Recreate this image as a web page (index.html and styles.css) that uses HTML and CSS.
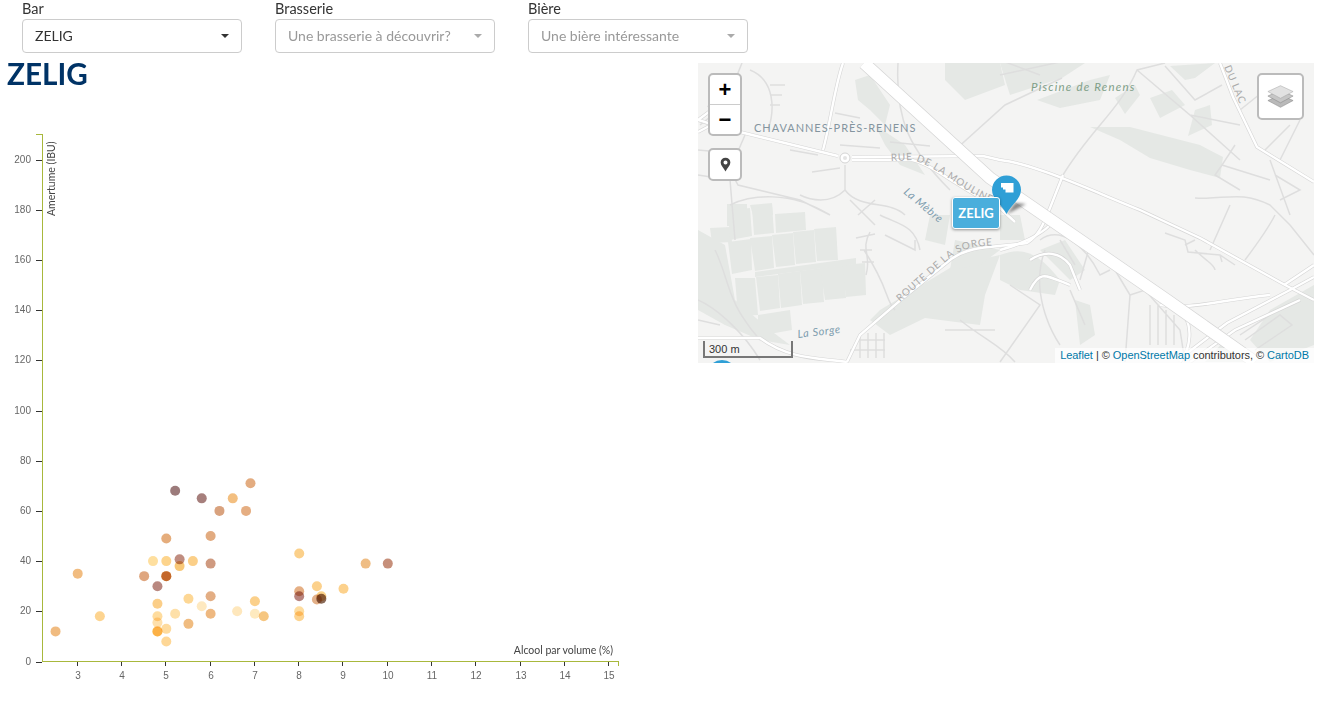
FILE: index.html
```html
<!DOCTYPE html>
<html lang="fr">
<head>
  <meta charset="UTF-8">
  <title>ZELIG</title>
  <link rel="stylesheet" href="styles.css">
</head>
<body>
  <div class="filters">
    <div class="filter">
      <label>Bar</label>
      <div class="select"><span class="value">ZELIG</span><span class="arrow"></span></div>
    </div>
    <div class="filter">
      <label>Brasserie</label>
      <div class="select empty"><span class="value">Une brasserie à découvrir?</span><span class="arrow"></span></div>
    </div>
    <div class="filter">
      <label>Bière</label>
      <div class="select empty"><span class="value">Une bière intéressante</span><span class="arrow"></span></div>
    </div>
  </div>

  <div class="main">
    <div class="left">
      <h1>ZELIG</h1>
      <svg id="chart" class="chart" viewBox="0 125 640 565"></svg>
    </div>

    <div class="map">
      <svg class="tiles" viewBox="698 63 616 300">
        <defs>
          <g id="streets">
            <path d="M698 150 L720 152 M698 175 L730 180 L735 240 M742 63 L725 105 L700 125 M750 70 C775 80 775 110 768 130 M770 85 H785 M770 95 H782 M770 105 H780"/>
            <path d="M745 135 L730 170 L738 185 L800 200 L830 215 C790 190 750 195 730 205"/>
            <path d="M845 165 V190 C860 210 890 200 905 215 M845 190 C830 205 810 200 800 195 M850 200 L875 225 M858 215 L875 200"/>
            <path d="M835 113 L860 118 M840 145 L880 148 M890 142 L930 146 M818 155 L790 150 M812 172 L840 168"/>
            <path d="M898 63 C895 120 910 150 950 190 M920 120 L955 150 L1005 105 L1062 78 M1000 75 L1060 62"/>
            <path d="M866 275 C872 255 860 250 870 232 M864 250 C890 290 885 300 895 310 M856 238 L875 234 M860 250 H872 M862 262 H874"/>
            <path d="M880 215 C900 225 915 225 920 250 M885 235 L915 250 L915 240"/>
            <path d="M1063 175 C1090 130 1120 110 1137 70 L1165 63 M1137 70 L1190 115 L1240 125 M1165 66 L1195 100 L1222 85 M1190 115 L1240 160 M1235 145 L1222 165 L1270 180 M1240 110 L1265 90"/>
            <path d="M1000 60 L1040 75 M1222 165 L1215 175 L1240 190 M1270 160 L1290 215 M1265 150 L1290 125 M1280 160 L1300 120 M1275 175 L1300 190 L1280 200"/>
            <path d="M1195 198 C1225 200 1240 190 1270 205 L1290 225 M1230 205 L1210 250 M1245 260 C1260 240 1270 225 1275 215 M1290 225 L1314 255 M1170 225 L1205 240"/>
            <path d="M1165 233 L1185 240 L1188 252 L1220 255 L1235 265 M1185 245 L1195 240 M1220 255 L1222 262 M1195 250 C1205 260 1215 265 1215 270"/>
            <path d="M1040 240 C1060 225 1085 245 1100 275 L1110 270 M1060 240 L1075 265 M1045 250 C1030 290 1050 330 1060 345 M1070 290 L1085 325 M1090 245 L1080 280"/>
            <path d="M1115 270 L1130 295 L1125 362 M1130 295 L1145 290 L1180 330 L1185 362 M1150 305 V345 M1158 305 V345 M1166 310 V345 M1174 315 V345"/>
            <path d="M860 333 V358 M868 333 V358 M876 333 V358 M884 333 V358 M850 350 H885 M860 340 H885"/>
            <path d="M1245 340 L1280 315 L1292 325 L1255 350 M1240 335 L1270 315"/>
            <path d="M698 300 C720 310 745 335 760 360 M715 250 C730 280 725 300 760 340 M698 320 L720 325"/>
            <path d="M960 320 C985 340 1000 345 1015 362 M1010 285 L1040 305 L1000 362 M945 330 H995"/>
          </g>
          <g id="links">
            <path d="M843 63 C835 85 830 125 823 150"/>
            <path d="M698 120 C715 125 730 130 740 132 L838 156"/>
            <path d="M698 120 L725 100 M708 105 L725 120 M698 132 L730 115"/>
            <path d="M852 157 L983 156 L1000 160 C1035 164 1090 190 1140 210 L1200 238 L1285 285 L1314 300"/>
            <path d="M852 160 L912 160 C935 165 960 190 1000 208 L1015 222"/>
            <path d="M847 362 L860 335 L903 298 L950 260 C970 245 990 248 1027 243 C1040 235 1045 220 1050 208 L1063 175"/>
            <path d="M1220 63 L1233 97 L1257 147 L1314 182"/>
            <path d="M1000 250 C1020 245 1040 235 1050 225 M1030 260 C1045 250 1060 252 1070 265 L1080 290 M1030 290 C1040 270 1045 275 1070 285"/>
            <path d="M1160 305 C1190 310 1220 300 1270 295 M1178 360 L1227 323 L1290 290 L1314 277 M1190 362 L1235 330 L1300 300 M1180 310 C1195 325 1190 350 1180 362"/>
            <path d="M698 338 H760 C790 360 820 358 847 362"/>
            <path d="M1284 285 L1314 265"/>
          </g>
        </defs>

        <rect class="land" x="698" y="63" width="616" height="300"/>

        <g class="green">
          <path d="M698 230 L725 245 L735 300 L770 330 L790 345 L760 340 L725 325 L698 310 Z"/>
          <path d="M855 80 L870 75 L890 105 L885 125 L870 110 L858 100 Z"/>
          <path d="M875 125 L905 145 L925 175 L900 165 L885 145 Z"/>
          <path d="M945 63 L1000 63 L1005 85 L965 100 L945 80 Z"/>
          <path d="M1000 63 L1085 63 L1062 78 L1010 95 Z"/>
          <path d="M1037 100 L1090 80 L1110 75 L1100 100 L1060 108 Z"/>
          <path d="M1115 98 L1135 85 L1140 95 L1125 114 Z"/>
          <path d="M1150 98 L1172 90 L1185 105 L1160 118 Z"/>
          <path d="M1195 110 L1210 105 L1212 125 L1188 136 Z"/>
          <path d="M1170 66 L1215 63 L1195 78 L1185 80 Z"/>
          <path d="M1090 127 L1130 127 L1200 145 L1223 157 L1220 178 L1190 170 L1150 158 L1120 140 Z"/>
          <path d="M880 310 L955 265 L1000 255 L985 295 L980 325 L925 318 L890 335 L870 320 Z"/>
          <path d="M955 240 L1000 250 L980 265 L950 270 Z"/>
          <path d="M930 215 L950 215 L945 245 L925 240 Z"/>
          <path d="M1000 255 C1025 245 1040 255 1060 280 L1055 295 L1020 290 L1000 280 Z"/>
          <path d="M1040 250 L1065 240 L1085 270 L1070 280 Z"/>
          <path d="M1075 300 L1090 305 L1095 335 L1080 345 Z"/>
          <path d="M1000 215 L1020 215 L1025 240 L1000 240 Z"/>
          <path d="M1205 362 L1225 340 L1250 362 Z"/>
          <path d="M1270 310 L1314 285 L1314 345 L1270 362 L1250 340 Z"/>
          <rect x="727" y="204" width="20" height="22"/>
          <path d="M750 205 L772 203 L773 215 L755 222 Z"/>
          <path d="M710 228 L730 227 L732 242 L712 243 Z"/>
          <path d="M728 210 L750 208 L752 236 L730 240 Z"/>
          <path d="M752 208 L772 205 L774 233 L754 235 Z"/>
          <path d="M775 214 L805 212 L806 230 L776 233 Z"/>
          <path d="M728 242 L751 239 L752 270 L732 274 Z"/>
          <path d="M750 238 L772 236 L774 268 L755 271 Z"/>
          <path d="M772 235 L793 233 L795 265 L776 267 Z"/>
          <path d="M793 232 L814 230 L816 262 L796 264 Z"/>
          <path d="M814 229 L836 227 L838 260 L817 261 Z"/>
          <path d="M735 278 L755 278 L758 315 L738 316 Z"/>
          <path d="M756 277 L778 275 L780 308 L760 311 Z"/>
          <path d="M778 274 L800 271 L802 305 L781 308 Z"/>
          <path d="M800 271 L822 268 L824 302 L803 304 Z"/>
          <path d="M820 268 L844 265 L846 298 L825 300 Z"/>
          <path d="M842 265 L865 263 L866 295 L846 297 Z"/>
          <path d="M758 315 L790 310 L792 330 L758 336 Z"/>
          <path d="M755 272 L856 258 L856 264 L755 277 Z"/>
        </g>

        <g class="streets"><use href="#streets"/></g>
        <g class="road-case"><use href="#links"/></g>
        <g class="road-fill"><use href="#links"/></g>

        <path class="highway-case" d="M864 63 L990 178 L1038 211 L1167 300 L1255 362"/>
        <path class="highway-fill" d="M864 63 L990 178 L1038 211 L1167 300 L1255 362"/>

        <circle class="roundabout" cx="845" cy="158" r="5"/>
        <circle class="roundabout-core" cx="845" cy="158" r="2"/>

        <path id="rue" class="guide" d="M891 161 L912 160 C935 165 960 190 992 203"/>
        <path id="route" class="guide" d="M900 302 L950 258 C965 247 975 246 1000 245"/>
        <path id="lac" class="guide" d="M1224 67 L1243 112"/>

        <text class="place" x="754" y="132">CHAVANNES-PRÈS-RENENS</text>
        <text class="road-label"><textPath href="#rue">RUE DE LA MOULINE</textPath></text>
        <text class="road-label"><textPath href="#route">ROUTE DE LA SORGE</textPath></text>
        <text class="road-label"><textPath href="#lac">DU LAC</textPath></text>
        <text class="park" x="1031" y="91">Piscine de Renens</text>
        <text class="water" transform="translate(903 193) rotate(40)">La Mèbre</text>
        <text class="water" transform="translate(798 338) rotate(-7)">La Sorge</text>

        <path class="pin-shadow" d="M1007 214 L1015 203 L1026 204 Z"/>
        <path class="pin" d="M1006.5 214 C1002 205 992 199 992 190 A14.5 14.5 0 0 1 1021 190 C1021 199 1011 205 1006.5 214 Z"/>
        <path class="pin-icon" d="M1001 183 H1013.5 V192.5 H1005.5 V189.5 H1003 V187.5 H1001 Z"/>
        <circle class="pin" cx="722" cy="375" r="15"/>
      </svg>

      <div class="map-label">ZELIG</div>

      <div class="map-btns zoom-btns">
        <div class="map-btn">+</div>
        <div class="map-btn">−</div>
      </div>
      <div class="map-btns locate-btn">
        <div class="map-btn">
          <svg viewBox="0 0 12 16" width="11" height="15">
            <path fill="#444" fill-rule="evenodd" d="M6 0.5 A5.3 5.3 0 0 1 11.3 5.8 C11.3 9 8 12 6 15.5 C4 12 0.7 9 0.7 5.8 A5.3 5.3 0 0 1 6 0.5 Z M6 3.6 A2.2 2.2 0 1 0 6 8 A2.2 2.2 0 1 0 6 3.6 Z"/>
          </svg>
        </div>
      </div>
      <div class="map-btns layers-btn">
        <svg viewBox="0 0 30 26" width="27" height="25">
          <path fill="#b9b9b9" stroke="#888" stroke-width=".6" d="M15 11 L29 17.5 L15 25 L1 17.5 Z"/>
          <path fill="#c6c6c6" stroke="#888" stroke-width=".6" d="M15 6 L29 12.5 L15 20 L1 12.5 Z"/>
          <path fill="#e2e2e2" stroke="#aaa" stroke-width=".6" d="M15 1 L29 7.5 L15 15 L1 7.5 Z"/>
        </svg>
      </div>

      <div class="scale">300 m</div>
      <div class="attribution"><a>Leaflet</a> | © <a>OpenStreetMap</a> contributors, © <a>CartoDB</a></div>
    </div>
  </div>

  <script src="chart.js"></script>
</body>
</html>
```

FILE: styles.css
```css
body {
  margin: 0;
  font-family: 'Lato', sans-serif;
  color: #333;
  background-color: #fff;
  overflow: hidden;
}

.filters {
  display: flex;
  gap: 33px;
  padding-left: 22px;
  margin-bottom: 10px;
}

.filter {
  width: 220px;
}

.filter label {
  display: block;
  font-size: 14.5px;
  line-height: 17px;
  margin-bottom: 2px;
}

.select {
  display: flex;
  justify-content: space-between;
  align-items: center;
  height: 34px;
  box-sizing: border-box;
  padding: 0 12px;
  border: 1px solid #ccc;
  border-radius: 4px;
  font-size: 14px;
  background-color: #fff;
}

.select .value {
  padding-bottom: 2px;
}

.select.empty .value {
  color: #999;
}

.arrow {
  width: 0;
  height: 0;
  border-top: 4px solid #333;
  border-left: 4px solid transparent;
  border-right: 4px solid transparent;
}

.select.empty .arrow {
  border-top-color: #aaa;
}

.main {
  display: flex;
}

.left {
  width: 698px;
}

h1 {
  margin: 0 0 40px;
  padding-left: 7px;
  font-size: 29.7px;
  line-height: 22px;
  font-weight: 700;
  color: #003366;
}

.chart {
  display: block;
  width: 640px;
  height: 565px;
}

.axis {
  stroke: #a8b83c;
  fill: none;
  shape-rendering: crispEdges;
}

.tick {
  stroke: #333;
  shape-rendering: crispEdges;
}

.tick-label {
  font-family: 'Liberation Sans', sans-serif;
  font-size: 10px;
  fill: #666;
}

.axis-label {
  font-family: 'Lato', sans-serif;
  font-size: 10.5px;
  fill: #444;
}

.dot {
  mix-blend-mode: multiply;
}

.map {
  position: relative;
  width: 616px;
  height: 300px;
}

.tiles {
  display: block;
  width: 616px;
  height: 300px;
}

.land {
  fill: #f4f4f3;
}

.green {
  fill: #e5e8e5;
}

.streets {
  fill: none;
  stroke: #dedede;
  stroke-width: 1.5;
}

.road-case {
  fill: none;
  stroke: #d6d6d6;
  stroke-width: 3.6;
}

.road-fill {
  fill: none;
  stroke: #fff;
  stroke-width: 2.4;
}

.highway-case {
  fill: none;
  stroke: #d6d6d6;
  stroke-width: 13;
}

.highway-fill {
  fill: none;
  stroke: #fff;
  stroke-width: 11.5;
}

.roundabout {
  fill: #fff;
  stroke: #d4d4d4;
}

.roundabout-core {
  fill: #e4e4e4;
}

.guide {
  fill: none;
}

.place {
  font-size: 11px;
  letter-spacing: .95px;
  fill: #84959f;
}

.road-label {
  font-size: 10px;
  letter-spacing: .8px;
  fill: #aaa;
}

.park {
  font-size: 11.5px;
  font-style: italic;
  letter-spacing: 1.2px;
  fill: #7f9f88;
}

.water {
  font-size: 11px;
  font-style: italic;
  letter-spacing: .6px;
  fill: #7d9cae;
}

.pin {
  fill: #2f9fd6;
}

.pin-icon {
  fill: #fff;
}

.pin-shadow {
  fill: #555;
  opacity: .7;
  filter: blur(1.5px);
}

.map-label {
  position: absolute;
  left: 254px;
  top: 134px;
  width: 48px;
  height: 32px;
  box-sizing: border-box;
  border: 1px solid #fff;
  border-radius: 3px;
  box-shadow: 0 1px 3px rgba(0, 0, 0, 0.4);
  background-color: #4aaedc;
  color: #fff;
  font-size: 13px;
  font-weight: 700;
  line-height: 30px;
  text-align: center;
}

.map-btns {
  position: absolute;
  box-sizing: border-box;
  border: 2px solid #bbb;
  border-radius: 5px;
  background-color: #fff;
}

.zoom-btns {
  left: 10px;
  top: 10px;
  width: 34px;
}

.locate-btn {
  left: 10px;
  top: 85px;
  width: 34px;
}

.layers-btn {
  display: flex;
  justify-content: center;
  align-items: center;
  left: 559px;
  top: 10px;
  width: 47px;
  height: 47px;
}

.map-btn {
  display: flex;
  justify-content: center;
  align-items: center;
  height: 29px;
  font-family: 'Liberation Sans', sans-serif;
  font-size: 22px;
  font-weight: 700;
  color: #000;
}

.map-btn + .map-btn {
  border-top: 1px solid #ccc;
}

.scale {
  position: absolute;
  left: 5px;
  bottom: 5px;
  width: 82px;
  height: 15px;
  padding-left: 4px;
  border: 2px solid #777;
  border-top: none;
  font-family: 'Liberation Sans', sans-serif;
  font-size: 11px;
  line-height: 16px;
  color: #333;
}

.attribution {
  position: absolute;
  right: 0;
  bottom: 0;
  padding: 0 5px;
  background-color: rgba(255, 255, 255, 0.7);
  font-family: 'Liberation Sans', sans-serif;
  font-size: 11px;
  line-height: 15px;
  letter-spacing: -0.04px;
  color: #333;
}

.attribution a {
  color: #0078a8;
}
```

FILE: chart.js
```js
// abv, ibu, colour
const beers = [
  [5.2, 68, "#9c7b7b"], [5.8, 65, "#a67f7c"], [6.2, 60, "#d9a27e"], [6, 50, "#e2ab80"],
  [5, 49, "#e5ad7c"], [4.7, 40, "#fedf9f"], [5, 40, "#fdd48c"], [5.3, 38, "#f8c878"],
  [5.3, 40.7, "#c08d80"], [5.6, 40, "#fbcf88"], [6, 39, "#cf9a80"], [3, 35, "#f1bc80"],
  [4.5, 34, "#dfa67f"], [5, 34, "#e0a060"], [5, 34, "#dfa672"], [4.8, 30, "#b98880"],
  [6, 26, "#e3ae84"], [5.5, 25, "#fdd795"], [4.8, 23, "#fbce88"], [5.8, 22, "#fee9c0"],
  [5.2, 19, "#fee0a8"], [6, 19, "#eeb880"], [3.5, 18, "#fdd490"], [4.8, 18, "#fedc9e"],
  [4.8, 15.5, "#fee0ac"], [5.5, 15, "#f0bc80"], [5, 13, "#fedb9e"], [2.5, 12, "#f0bb80"],
  [4.8, 12, "#fdcd70"], [4.8, 12, "#fedc9e"], [5, 8, "#fed796"], [6.9, 71, "#e3ac80"],
  [6.5, 65, "#f3bf80"], [6.8, 60, "#e5ae82"], [8, 43, "#fbd08a"], [9.5, 39, "#efbd84"],
  [10, 39, "#c68f7a"], [8.4, 30, "#fcd18c"], [9, 29, "#fcd18c"], [8, 28, "#e5af84"],
  [8, 26, "#b9857f"], [8.5, 26, "#fdd48c"], [8.4, 24.7, "#e3b088"], [8.5, 25, "#8a6a58"],
  [7, 24, "#fbd08a"], [6.6, 20, "#fee7bc"], [7, 19, "#feeabf"], [7.2, 18, "#f6c680"],
  [8, 20, "#fedc9e"], [8, 18, "#fdd490"]
];

const svg = document.getElementById("chart");
const ns = "http://www.w3.org/2000/svg";

function x(v) { return 77.7 + (v - 3) * 44.3; }
function y(v) { return 661.5 - v * 2.51; }

function add(tag, attrs, text) {
  const el = document.createElementNS(ns, tag);
  for (const k in attrs) el.setAttribute(k, attrs[k]);
  if (text !== undefined) el.textContent = text;
  svg.appendChild(el);
  return el;
}

for (let v = 0; v <= 200; v += 20) {
  const py = Math.round(y(v)) + 0.5;
  add("line", { class: "tick", x1: 36, x2: 42, y1: py, y2: py });
  add("text", { class: "tick-label", x: 31, y: py + 2.5, "text-anchor": "end" }, v);
}

for (let v = 3; v <= 15; v++) {
  const px = Math.round(x(v)) - 0.5;
  add("line", { class: "tick", x1: px, x2: px, y1: 661, y2: 666 });
  add("text", { class: "tick-label", x: px + 0.5, y: 679, "text-anchor": "middle" }, v);
}

add("path", { class: "axis", d: "M36 134.5 H42.5 V661.5 H618.5 V666" });

add("text", { class: "axis-label", x: 613, y: 654, "text-anchor": "end" }, "Alcool par volume (%)");
add("text", { class: "axis-label", transform: "translate(55 216) rotate(-90)" }, "Amertume (IBU)");

beers.forEach(function (b) {
  add("circle", { class: "dot", cx: x(b[0]), cy: y(b[1]), r: 5, fill: b[2] });
});
```
